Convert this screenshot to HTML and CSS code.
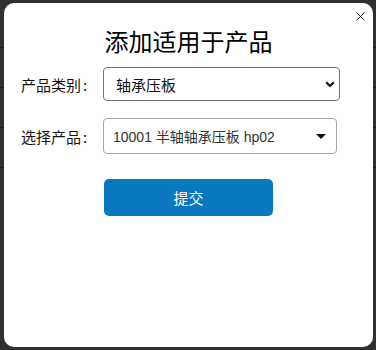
FILE: index.html
```html
<!DOCTYPE html>
<html lang="zh-CN">
<head>
    <meta charset="UTF-8">
    <meta name="viewport" content="width=device-width, initial-scale=1.0">
    <title>添加适用于产品</title>
    <link rel="stylesheet" href="styles.css">
</head>
<body>

<div id="page-rows">
    <div class="page-row first"></div>
    <div class="page-row"></div>
    <div class="page-row"></div>
    <div class="page-row"></div>
</div>

<div id="modal-overlay">
    <div id="modal-box">
        <button id="close-button" title="关闭">
            <svg width="9" height="9" viewBox="0 0 9 9"><path d="M0.5 0.5 L8.5 8.5 M8.5 0.5 L0.5 8.5" stroke="#222" stroke-width="1" fill="none"/></svg>
        </button>
        <h2 class="modal-title">添加适用于产品</h2>

        <div class="form-row">
            <label class="form-label">产品类别<span class="colon">:</span></label>
            <div class="fake-select category">
                <span>轴承压板</span>
                <svg class="chevron" width="10" height="7" viewBox="0 0 10 7"><path d="M1.2 1.2 L5 5 L8.8 1.2" stroke="#111" stroke-width="2.2" fill="none"/></svg>
            </div>
        </div>

        <div class="form-row second">
            <label class="form-label">选择产品<span class="colon">:</span></label>
            <div class="fake-select product">
                <span>10001 半轴轴承压板 hp02</span>
                <svg class="caret" width="10" height="5" viewBox="0 0 10 5"><path d="M0 0 L10 0 L5 5 Z" fill="#111"/></svg>
            </div>
        </div>

        <div class="button-row">
            <button id="submit-button">提交</button>
        </div>
    </div>
</div>

</body>
</html>
```

FILE: styles.css
```css
body {
    font-family: 'Noto Sans CJK SC', 'Liberation Sans', sans-serif;
    margin: 0;
    padding: 0;
    background-color: #303030;
    height: 350px;
    overflow: hidden;
}

/* linhas da tabela por trás do modal */
#page-rows {
    padding-top: 8px;
}

.page-row {
    height: 39px;
    border-bottom: 1px solid #1c1c1c;
}

#modal-overlay {
    position: fixed;
    top: 0;
    left: 0;
    width: 100%;
    height: 100%;
    padding: 3px 3px 3px 4px;
    box-sizing: border-box;
}

#modal-box {
    position: relative;
    height: 344px;
    background-color: #fff;
    border-radius: 10px;
    padding-top: 21px;
    box-sizing: border-box;
}

#close-button {
    position: absolute;
    top: 9px;
    right: 8px;
    border: none;
    background: none;
    padding: 0;
    width: 9px;
    height: 9px;
    cursor: pointer;
}

#close-button svg {
    display: block;
}

.modal-title {
    margin: 0 0 9px 0;
    text-align: center;
    font-size: 24px;
    font-weight: normal;
    line-height: 34px;
    color: #000;
}

.form-row {
    display: flex;
    align-items: center;
    padding-left: 17px;
}

.form-row.second {
    margin-top: 17px;
}

.form-label {
    width: 82px;
    font-size: 15px;
    color: #111;
}

.colon {
    margin-left: 2px;
}

.fake-select {
    display: flex;
    align-items: center;
    justify-content: space-between;
    box-sizing: border-box;
    border-radius: 4px;
    background-color: #fff;
    color: #111;
}

.fake-select.category {
    width: 237px;
    height: 34px;
    border: 1px solid #767676;
    padding: 0 4px 0 12px;
    font-size: 15px;
}

.fake-select.product {
    width: 234px;
    height: 36px;
    border: 1px solid #aaa;
    padding: 0 10px 0 9px;
    font-family: 'Liberation Sans', 'Noto Sans CJK SC', sans-serif;
    font-size: 14px;
    color: #333;
}

.button-row {
    padding-left: 100px;
    margin-top: 25px;
}

#submit-button {
    width: 169px;
    height: 37px;
    background-color: #0a78be;
    color: #fff;
    border: none;
    border-radius: 5px;
    font-family: inherit;
    font-size: 15px;
    cursor: pointer;
}
```
